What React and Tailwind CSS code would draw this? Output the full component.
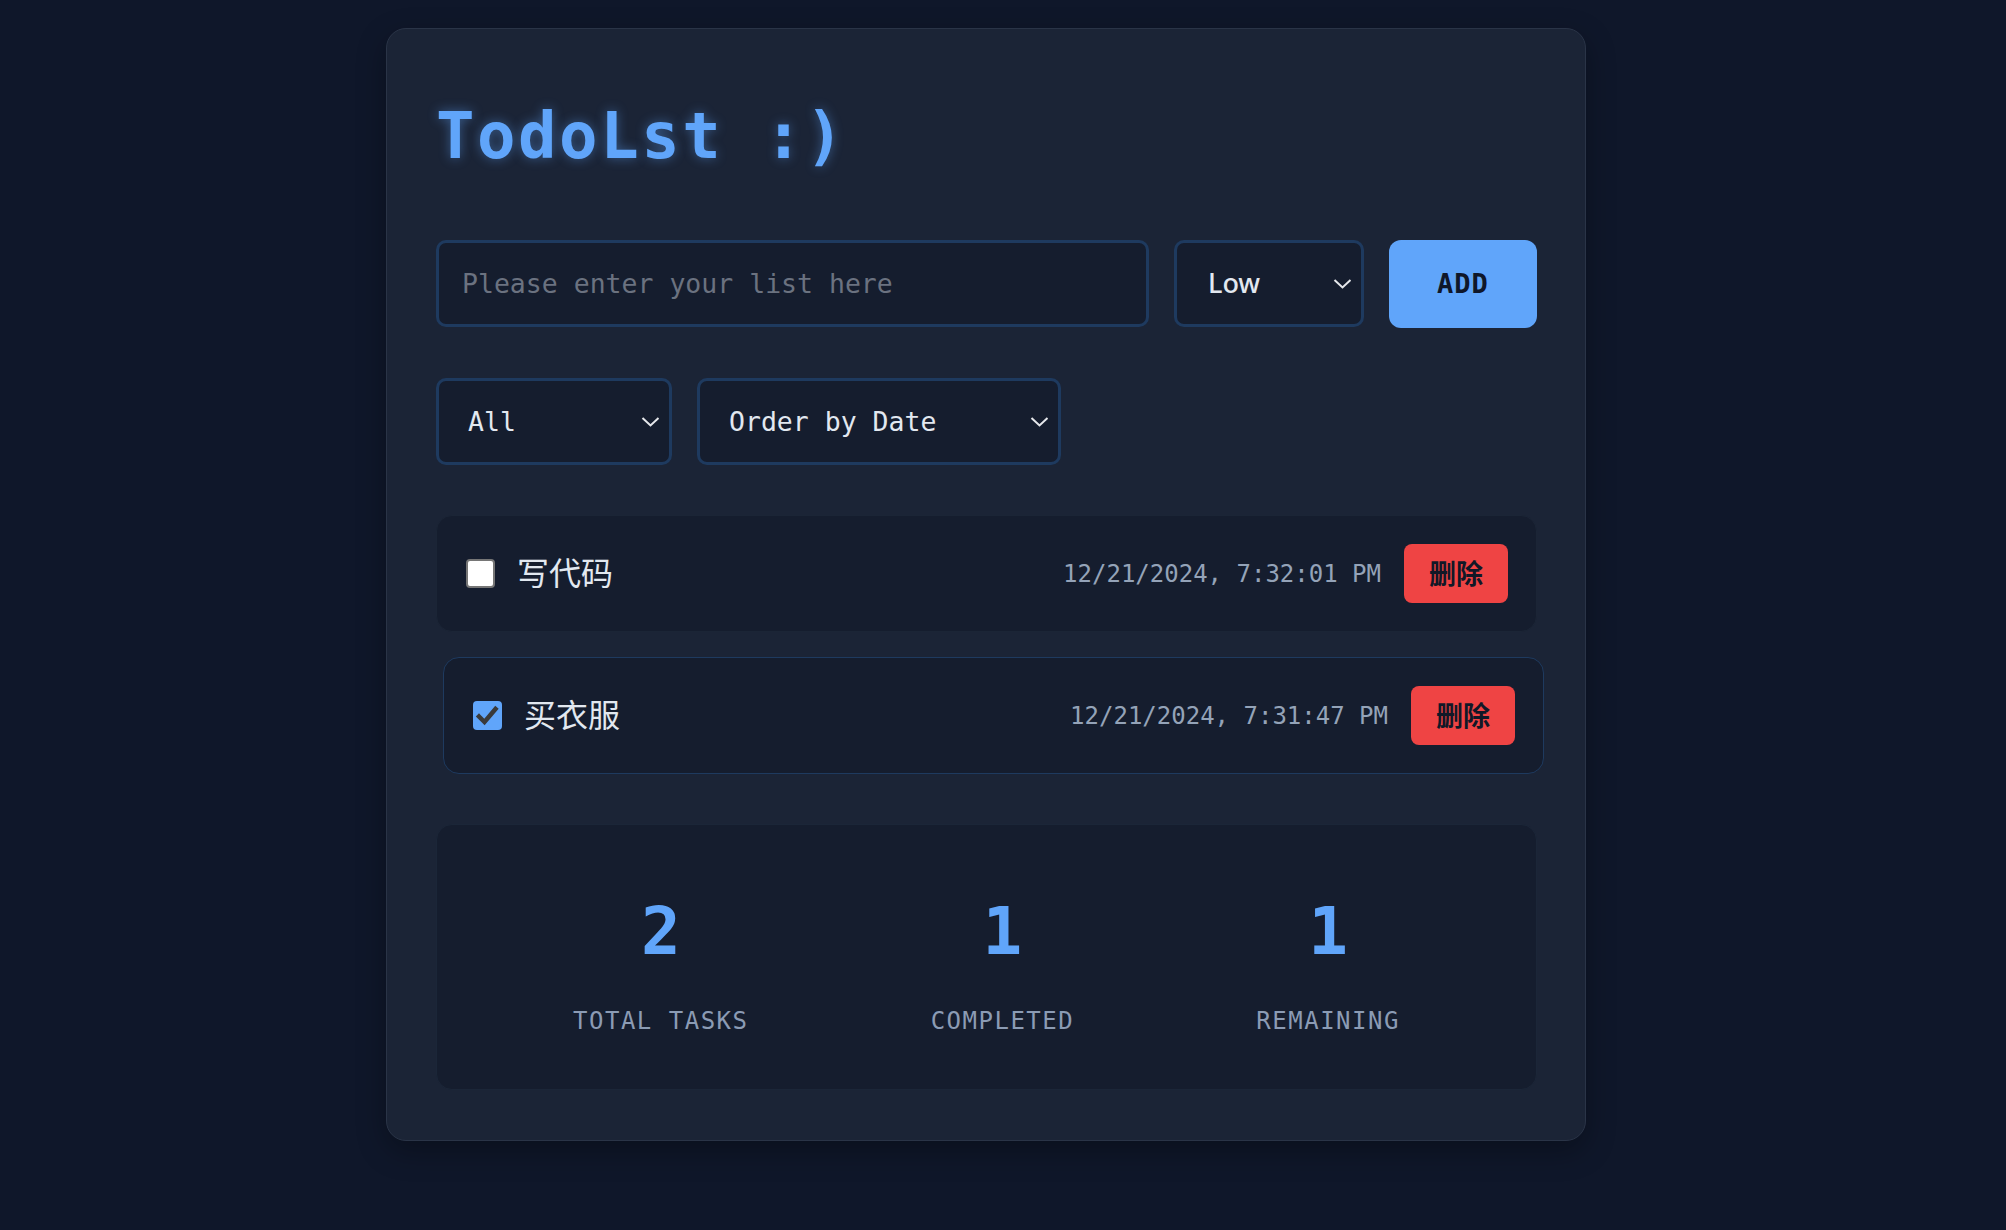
import React from "react";

const MONO = "font-['DejaVu_Sans_Mono','Noto_Sans_CJK_SC',monospace]";

function Chevron() {
  return (
    <svg width="19" height="11" viewBox="0 0 19 11" className="absolute right-[9px] top-1/2 -translate-y-1/2 pointer-events-none">
      <path d="M1.5 1.5 L9.5 9 L17.5 1.5" fill="none" stroke="#e5e7eb" strokeWidth="2" />
    </svg>
  );
}

function SelectBox({ width, children, sans }) {
  return (
    <div className={`relative ${width} h-[87px] shrink-0 rounded-[10px] border-[3px] border-[#1e3a5f] bg-[#151d2e] flex items-center ${sans ? "pl-[31px]" : "pl-[29px]"}`}>
      <span className={sans ? "font-['Noto_Sans','Open_Sans',sans-serif] text-[27px] font-medium text-[#e2e8f0]" : `${MONO} text-[26.5px] text-[#e2e8f0]`}>
        {children}
      </span>
      <Chevron />
    </div>
  );
}

function Checkbox({ checked }) {
  if (checked) {
    return (
      <div className="w-[29px] h-[29px] shrink-0 rounded-[4px] bg-[#60a5fa] flex items-center justify-center ml-[1px]">
        <svg width="29" height="29" viewBox="0 0 29 29">
          <path d="M6 15.5 L11.5 21 L22.5 8" fill="none" stroke="#3a3a3a" strokeWidth="4.5" strokeLinecap="square" />
        </svg>
      </div>
    );
  }
  return <div className="w-[29px] h-[29px] shrink-0 rounded-[4px] bg-white border-2 border-[#767676] ml-[1px]" />;
}

function TodoItem({ text, date, checked, hovered }) {
  return (
    <div
      className={`flex items-center h-[117px] rounded-[16px] bg-[#151d2e] border px-[28px] ${
        hovered ? "border-[#1e3a5f] translate-x-[7px]" : "border-[#1b2536]"
      }`}
    >
      <Checkbox checked={checked} />
      <span className="ml-[22px] mb-[5px] font-['Noto_Sans_CJK_SC',sans-serif] text-[32px] text-[#e2e8f0] leading-none">{text}</span>
      <span className={`ml-auto ${MONO} text-[24px] text-[#94a3b8]`}>{date}</span>
      <button className="ml-[23px] w-[104px] h-[59px] rounded-[8px] bg-[#ef4444] flex items-center justify-center font-['Noto_Sans_CJK_SC',sans-serif] text-[27px] font-bold text-[#111827]">
        删除
      </button>
    </div>
  );
}

function Stat({ value, label }) {
  return (
    <div className="flex flex-col items-center">
      <div className={`${MONO} text-[66px] font-bold leading-[79px] text-[#60a5fa]`}>{value}</div>
      <div className={`${MONO} mt-[32px] text-[24px] leading-[36px] tracking-[1.5px] text-[#8b9bb4] uppercase`}>{label}</div>
    </div>
  );
}

export default function App() {
  return (
    <div className="min-h-screen w-full bg-[#0f172a] flex justify-center pr-[34px] pt-[28px]">
      <div className="w-[1200px] h-fit rounded-[20px] border border-[#2a3447] bg-[#1b2436] pl-[49px] pr-[48px] pt-[69px] pb-[50px] shadow-[0_10px_30px_rgba(0,0,0,0.3)]">
        <h1 className={`${MONO} text-[64px] font-bold leading-[77px] tracking-[2.5px] text-[#60a5fa] [text-shadow:0_0_12px_rgba(96,165,250,0.45)]`}>
          TodoLst :)
        </h1>

        <div className="mt-[65px] flex gap-[25px]">
          <input
            className={`flex-1 min-w-0 h-[87px] rounded-[10px] border-[3px] border-[#1e3a5f] bg-[#151d2e] px-[23px] ${MONO} text-[26.5px] text-[#e2e8f0] placeholder:text-[#6b7280] outline-none`}
            placeholder="Please enter your list here"
          />
          <SelectBox width="w-[190px]" sans>Low</SelectBox>
          <button className={`w-[148px] h-[88px] shrink-0 rounded-[12px] bg-[#60a5fa] ${MONO} text-[27px] font-bold tracking-[1px] text-[#0f172a]`}>
            ADD
          </button>
        </div>

        <div className="mt-[50px] flex gap-[25px]">
          <SelectBox width="w-[236px]">All</SelectBox>
          <SelectBox width="w-[364px]">Order by Date</SelectBox>
        </div>

        <div className="mt-[50px] flex flex-col gap-[25px]">
          <TodoItem text="写代码" date="12/21/2024, 7:32:01 PM" checked={false} />
          <TodoItem text="买衣服" date="12/21/2024, 7:31:47 PM" checked hovered />
        </div>

        <div className="mt-[50px] rounded-[16px] border border-[#1b2638] bg-[#151d2e] px-[45px] pt-[67px] pb-[50px] flex justify-around">
          <Stat value="2" label="Total Tasks" />
          <Stat value="1" label="Completed" />
          <Stat value="1" label="Remaining" />
        </div>
      </div>
    </div>
  );
}
